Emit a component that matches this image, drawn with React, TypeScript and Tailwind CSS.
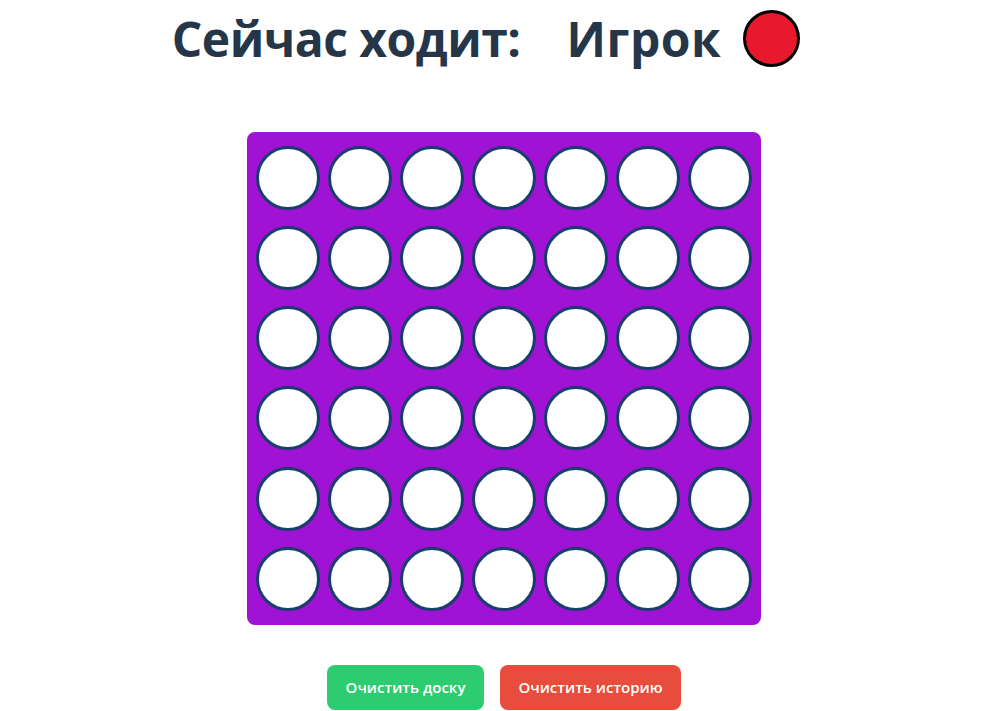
import React from 'react';

const ROWS = 6;
const COLS = 7;

const App: React.FC = () => {
  const cells = Array.from({ length: ROWS * COLS }, (_, i) => i);

  return (
    <div className="min-h-[711px] bg-white flex flex-col items-center font-['Open_Sans',sans-serif]">
      <div className="flex items-center pr-[18px] pt-[1px] h-[76px]">
        <h1 className="text-[48px] font-bold text-[#253649] tracking-[-0.5px]">Сейчас ходит:</h1>
        <span className="ml-[46px] text-[48px] font-bold text-[#253649] tracking-[0.5px]">Игрок</span>
        <div className="ml-[22px] w-[57px] h-[57px] rounded-full bg-[#e8192c] border-[3px] border-black" />
      </div>

      <div className="pl-[18px] mt-[56px] flex flex-col items-center">
        <div className="bg-[#a113d4] rounded-[8px] px-[5px] py-[6px] grid grid-cols-[repeat(7,72px)] w-[514px] h-[493px]">
          {cells.map((c) => (
            <div key={c} className="h-[80px] flex items-center justify-center">
              <div className="w-[64px] h-[64px] rounded-full bg-white border-[3px] border-[#183d6e]" />
            </div>
          ))}
        </div>

        <div className="flex gap-4 mt-[40px]">
          <button className="w-[157px] h-[45px] rounded-[8px] bg-[#2ecc71] text-white text-[15px] font-semibold">
            Очистить доску
          </button>
          <button className="w-[181px] h-[45px] rounded-[8px] bg-[#e74c3c] text-white text-[15px] font-semibold">
            Очистить историю
          </button>
        </div>
      </div>
    </div>
  );
};

export default App;
